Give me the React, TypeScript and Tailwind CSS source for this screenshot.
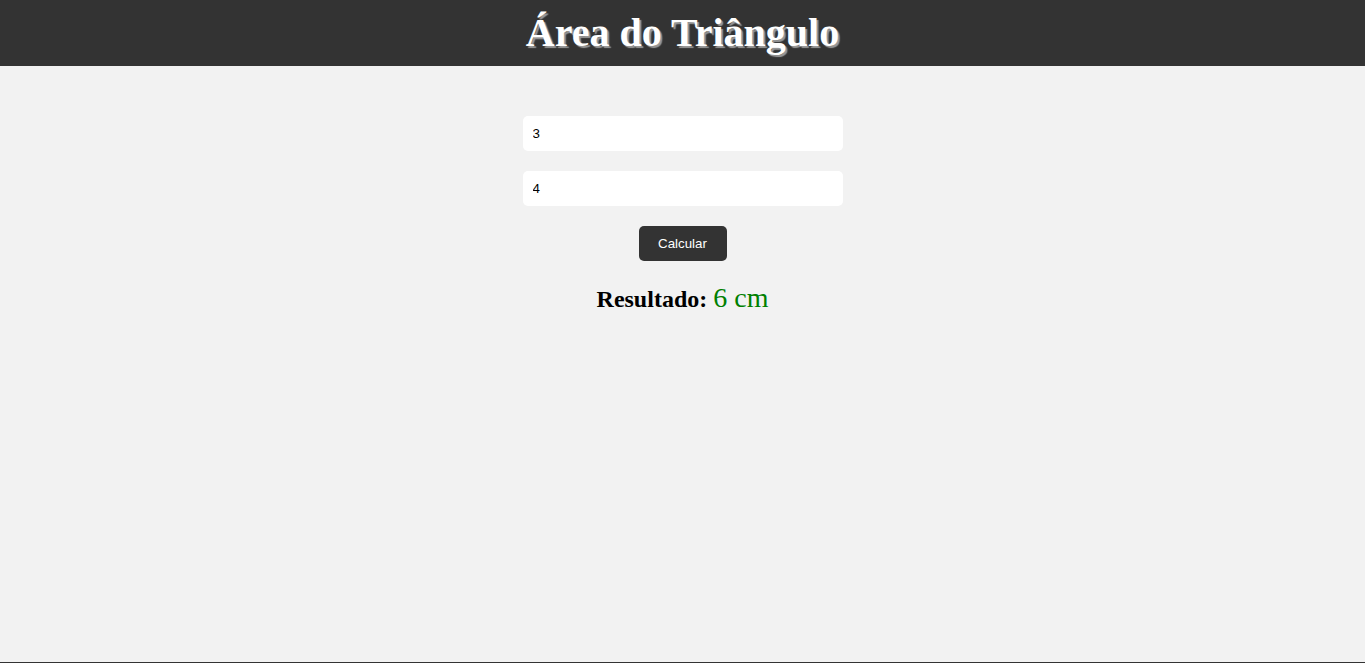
export default function App() {
  return (
    <div className="flex h-[663px] flex-col border-b border-[#333] bg-[#f2f2f2] font-['Liberation_Serif',serif]">
      <header className="flex h-[66px] items-center justify-center bg-[#333333]">
        <h1 className="text-[40px] font-bold leading-none text-white [text-shadow:2px_2px_1px_#999]">
          Área do Triângulo
        </h1>
      </header>

      <main className="flex flex-col items-center pt-[50px]">
        <input
          type="text"
          defaultValue="3"
          className="h-[35px] w-[320px] rounded-[5px] bg-white px-[10px] font-['Liberation_Sans',Arial,sans-serif] text-[13.33px] text-black outline-none"
        />
        <input
          type="text"
          defaultValue="4"
          className="mt-[20px] h-[35px] w-[320px] rounded-[5px] bg-white px-[10px] font-['Liberation_Sans',Arial,sans-serif] text-[13.33px] text-black outline-none"
        />
        <button
          type="button"
          className="mt-[20px] h-[35px] w-[88px] rounded-[5px] bg-[#333333] font-['Liberation_Sans',Arial,sans-serif] text-[13.33px] font-medium text-white"
        >
          Calcular
        </button>
        <p className="mt-[21px] text-[24px] leading-[1.15] text-black">
          <span className="font-bold">Resultado:</span>{" "}
          <span className="text-[28px] text-[#008000]">6 cm</span>
        </p>
      </main>
    </div>
  );
}
